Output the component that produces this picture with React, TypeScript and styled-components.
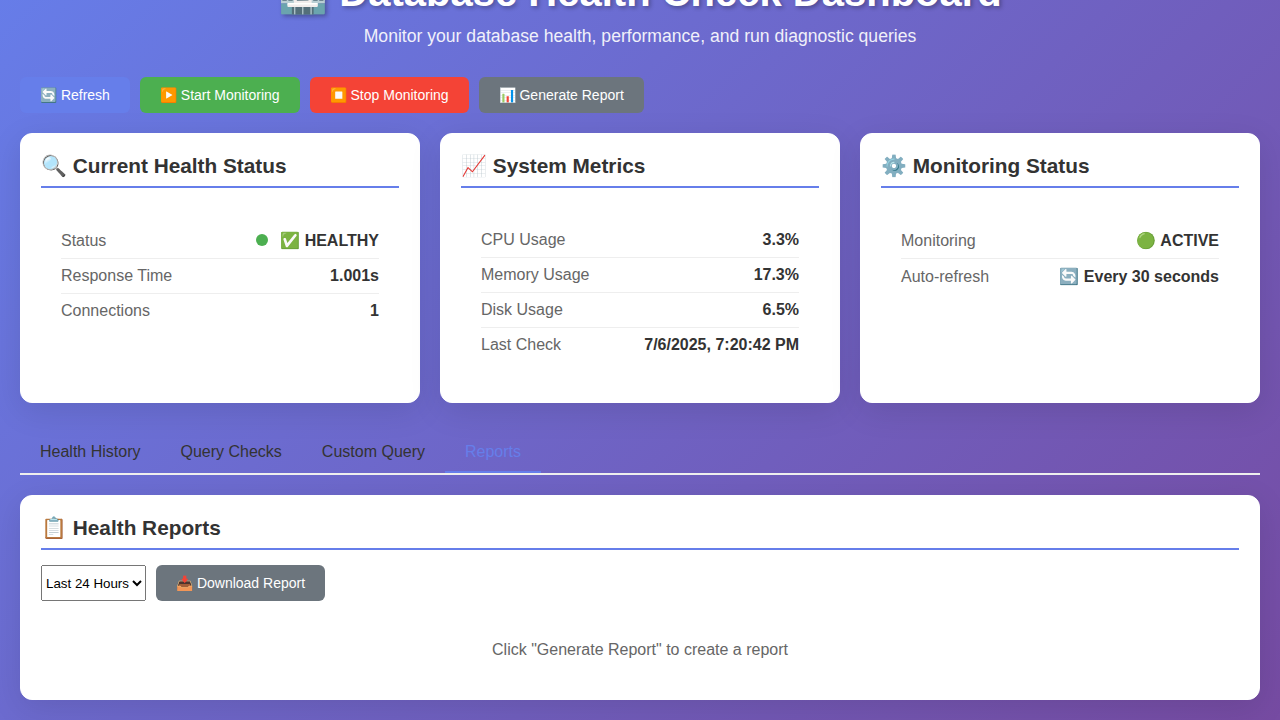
import React, { useState } from "react";
import styled, { createGlobalStyle } from "styled-components";

const GlobalStyle = createGlobalStyle`
  * { margin: 0; padding: 0; box-sizing: border-box; }
  body {
    font-family: "Liberation Sans", Arial, sans-serif;
    color: #333;
    overflow: hidden;
  }
`;

const Viewport = styled.div`
  height: 100vh;
  overflow: hidden;
  display: flex;
  flex-direction: column;
  justify-content: flex-end;
`;

const Page = styled.main`
  flex-shrink: 0;
  padding: 20px;
  background: linear-gradient(135deg, #667eea 0%, #764ba2 100%);
`;

const Header = styled.header`
  text-align: center;
  color: white;
  margin-bottom: 30px;
`;

const Title = styled.h1`
  font-size: 40px;
  margin-bottom: 10px;
  text-shadow: 2px 2px 4px rgba(0, 0, 0, 0.3);
`;

const Subtitle = styled.p`
  font-size: 17.6px;
  opacity: 0.9;
`;

const Toolbar = styled.div`
  display: flex;
  gap: 10px;
  margin-bottom: 20px;
`;

const tones = {
  primary: "#667eea",
  success: "#4caf50",
  danger: "#f44336",
  neutral: "#6c757d",
};

const Button = styled.button<{ $tone: keyof typeof tones }>`
  padding: 10px 20px;
  border: none;
  border-radius: 6px;
  background: ${(p) => tones[p.$tone]};
  color: white;
  font-family: inherit;
  font-size: 14px;
  cursor: pointer;
`;

const CardGrid = styled.div`
  display: grid;
  grid-template-columns: repeat(3, 1fr);
  gap: 20px;
  margin-bottom: 30px;
`;

const Card = styled.section`
  background: white;
  border: 1px solid white;
  border-radius: 12px;
  padding: 20px;
  box-shadow: 0 8px 32px rgba(0, 0, 0, 0.1);
`;

const CardTitle = styled.h3`
  font-size: 20.8px;
  color: #333;
  padding-bottom: 8px;
  border-bottom: 2px solid #667eea;
  margin-bottom: 15px;
`;

const Metrics = styled.div`
  padding: 20px;
`;

const MetricRow = styled.div`
  display: flex;
  justify-content: space-between;
  align-items: center;
  padding: 8px 0;
  border-bottom: 1px solid #eee;

  &:last-child {
    border-bottom: none;
  }
`;

const MetricLabel = styled.span`
  color: #666;
`;

const MetricValue = styled.span`
  font-weight: bold;
  color: #333;
`;

const StatusDot = styled.span`
  display: inline-block;
  width: 12px;
  height: 12px;
  border-radius: 50%;
  margin-right: 8px;
  background: #4caf50;
`;

const Tabs = styled.nav`
  display: flex;
  border-bottom: 2px solid #eee;
  margin-bottom: 20px;
`;

const Tab = styled.button<{ $active: boolean }>`
  padding: 10px 20px;
  border: none;
  border-bottom: 2px solid ${(p) => (p.$active ? "#667eea" : "transparent")};
  background: none;
  color: ${(p) => (p.$active ? "#667eea" : "#333")};
  font-family: inherit;
  font-size: 16px;
  cursor: pointer;
`;

const PeriodSelect = styled.select`
  font-family: inherit;
  font-size: 13.333px;
`;

const EmptyReport = styled.div`
  padding: 20px;
  text-align: center;
  color: #666;
`;

const tabNames = ["Health History", "Query Checks", "Custom Query", "Reports"];

function Metric({ label, children }: { label: string; children: React.ReactNode }) {
  return (
    <MetricRow>
      <MetricLabel>{label}</MetricLabel>
      <MetricValue>{children}</MetricValue>
    </MetricRow>
  );
}

export default function App() {
  const [tab, setTab] = useState("Reports");
  return (
    <Viewport>
      <GlobalStyle />
      <Page>
        <Header>
          <Title>🏥 Database Health Check Dashboard</Title>
          <Subtitle>Monitor your database health, performance, and run diagnostic queries</Subtitle>
        </Header>
        <Toolbar>
          <Button $tone="primary">🔄 Refresh</Button>
          <Button $tone="success">▶️ Start Monitoring</Button>
          <Button $tone="danger">⏹️ Stop Monitoring</Button>
          <Button $tone="neutral">📊 Generate Report</Button>
        </Toolbar>
        <CardGrid>
          <Card>
            <CardTitle>🔍 Current Health Status</CardTitle>
            <Metrics>
              <Metric label="Status"><StatusDot /> ✅ HEALTHY</Metric>
              <Metric label="Response Time">1.001s</Metric>
              <Metric label="Connections">1</Metric>
            </Metrics>
          </Card>
          <Card>
            <CardTitle>📈 System Metrics</CardTitle>
            <Metrics>
              <Metric label="CPU Usage">3.3%</Metric>
              <Metric label="Memory Usage">17.3%</Metric>
              <Metric label="Disk Usage">6.5%</Metric>
              <Metric label="Last Check">7/6/2025, 7:20:42 PM</Metric>
            </Metrics>
          </Card>
          <Card>
            <CardTitle>⚙️ Monitoring Status</CardTitle>
            <Metrics>
              <Metric label="Monitoring">🟢 ACTIVE</Metric>
              <Metric label="Auto-refresh">🔄 Every 30 seconds</Metric>
            </Metrics>
          </Card>
        </CardGrid>
        <Tabs>
          {tabNames.map((name) => (
            <Tab key={name} $active={name === tab} onClick={() => setTab(name)}>
              {name}
            </Tab>
          ))}
        </Tabs>
        <Card>
          <CardTitle>📋 Health Reports</CardTitle>
          <Toolbar>
            <PeriodSelect>
              <option>Last 24 Hours</option>
            </PeriodSelect>
            <Button $tone="neutral">📥 Download Report</Button>
          </Toolbar>
          <EmptyReport>Click "Generate Report" to create a report</EmptyReport>
        </Card>
      </Page>
    </Viewport>
  );
}
